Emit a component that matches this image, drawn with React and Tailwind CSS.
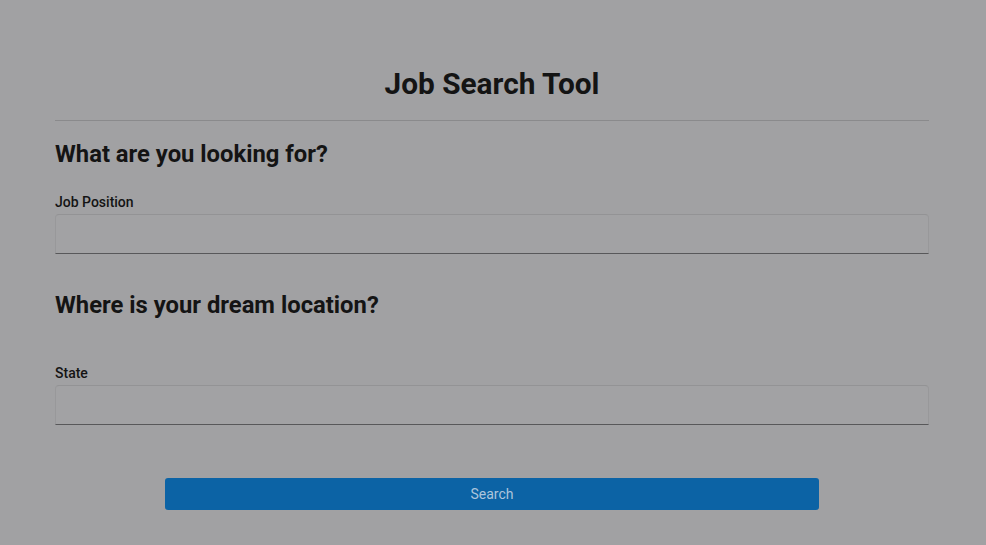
import React, { useState } from 'react';

const Field = ({ label, value, onChange }) => (
  <div className="flex flex-col">
    <label className="text-[14px] font-medium text-[#141414] leading-4 mb-[4px]">{label}</label>
    <div className="h-[40px] rounded-t-[4px] border border-[#98989a] border-t-[#939395] border-b-[#58585a] bg-[#a2a2a4]">
      <input
        className="w-full h-full bg-transparent px-3 text-sm outline-none"
        value={value}
        onChange={(e) => onChange(e.target.value)}
      />
    </div>
  </div>
);

const App = () => {
  const [position, setPosition] = useState('');
  const [state, setState] = useState('');

  return (
    <div className="min-h-screen w-full bg-[#a1a1a3] text-[#141414]" style={{ fontFamily: 'Roboto, "Liberation Sans", sans-serif' }}>
      <div className="ml-[55px] w-[874px] pt-[64px]">
        {/* Header */}
        <h1 className="text-center text-[29.8px] font-bold leading-10 pb-[16px] border-b border-[#8a8a8c]">
          Job Search Tool
        </h1>

        {/* What */}
        <h2 className="text-[23.8px] font-bold leading-8 mt-[17px]">What are you looking for?</h2>
        <div className="mt-[24px]">
          <Field label="Job Position" value={position} onChange={setPosition} />
        </div>

        {/* Where */}
        <h2 className="text-[23.8px] font-bold leading-8 mt-[35px]">Where is your dream location?</h2>
        <div className="mt-[44px]">
          <Field label="State" value={state} onChange={setState} />
        </div>

        <div className="flex justify-center mt-[53px]">
          <button className="w-[654px] h-[32px] rounded-[3px] bg-[#0c63a5] text-[#adc5dc] text-sm">
            Search
          </button>
        </div>
      </div>
    </div>
  );
};

export default App;
